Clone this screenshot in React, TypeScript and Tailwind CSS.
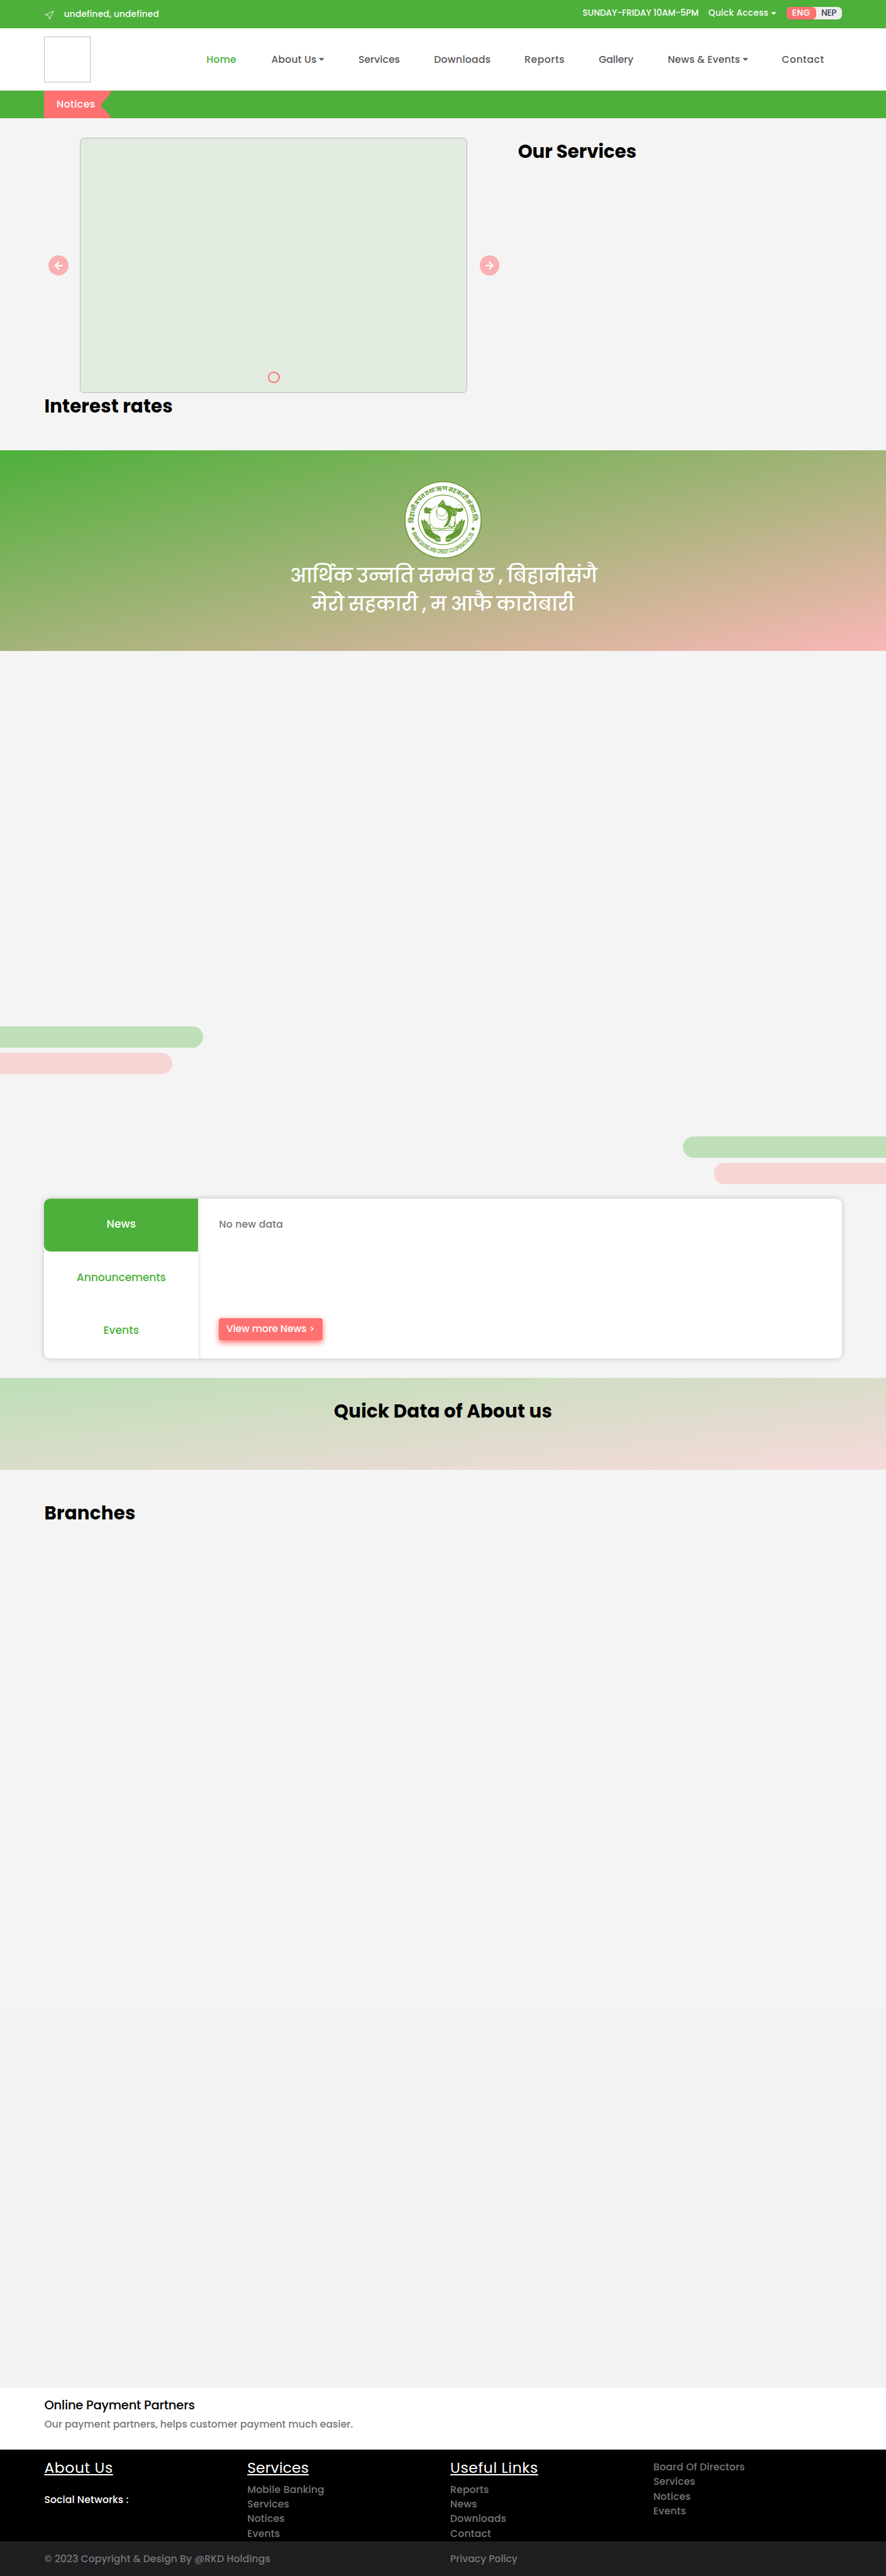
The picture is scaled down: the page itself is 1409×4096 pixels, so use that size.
import type { ReactNode } from "react";
import { ArrowLeft, ArrowRight, Navigation } from "lucide-react";

function Caret() {
  return (
    <svg width="9" height="5" viewBox="0 0 9 5" fill="currentColor">
      <path d="M0 0.300H9L4.500 4.800Z" />
    </svg>
  );
}

function TopBar() {
  return (
    <div className="flex h-[46px] justify-between bg-[#4db03a] px-[72px] text-[14px] font-medium text-white">
      <div className="flex items-center pt-[2px]">
        <Navigation className="mt-[1px]" size={17} strokeWidth={1.3} />
        <span className="ml-[15px] tracking-[0.21px]">undefined, undefined</span>
      </div>
      <div className="flex h-[43px] items-center">
        <span className="tracking-[-0.06px]">SUNDAY-FRIDAY 10AM-5PM</span>
        <span className="ml-[16px] flex items-center gap-[4px]">
          <span className="tracking-[0.34px]">Quick Access</span>
          <Caret />
        </span>
        <div className="ml-[16px] flex h-[21px] w-[90px] items-center rounded-[7px] bg-[#eeeeee] shadow-[0_1px_1px_rgba(0,0,0,0.15)]">
          <span className="flex h-full w-[48px] items-center justify-center rounded-[7px] bg-[#ff7070] font-semibold tracking-[0.4px] text-[#f3f3f3]">
            ENG
          </span>
          <span className="flex-1 text-center tracking-[-0.3px] text-[#2f3e52]">NEP</span>
        </div>
      </div>
    </div>
  );
}

function NavItem({ className, caret, children }: { className: string; caret?: boolean; children: ReactNode }) {
  return (
    <a className={`flex items-center gap-[4px] whitespace-nowrap ${className}`}>
      {children}
      {caret && <Caret />}
    </a>
  );
}

function Header() {
  return (
    <header className="flex h-[101px] items-center bg-white pl-[72px] text-[16px] font-medium text-[#585858]">
      <div className="h-[75px] w-[75px] border border-[#c0c0c0]" />
      <nav className="ml-[188.6px] flex">
        <NavItem className="w-[105.4px] tracking-[0.2px] text-[#4db03a]">Home</NavItem>
        <NavItem className="w-[141.6px] tracking-[0.18px]" caret>About Us</NavItem>
        <NavItem className="w-[123px] tracking-[0.06px]">Services</NavItem>
        <NavItem className="w-[147px] tracking-[0.28px]">Downloads</NavItem>
        <NavItem className="w-[120.9px] tracking-[0.56px]">Reports</NavItem>
        <NavItem className="w-[112.1px] tracking-[-0.11px]">Gallery</NavItem>
        <NavItem className="w-[185.4px] tracking-[0.13px]" caret>News &amp; Events</NavItem>
        <NavItem className="w-[75px] tracking-[0.52px]">Contact</NavItem>
      </nav>
    </header>
  );
}

function NoticeBar() {
  return (
    <div className="h-[45px] bg-[#4db03a] pl-[72px]">
      <div className="relative flex h-full w-[109px] items-center pl-[20px] text-[16px] font-medium text-white">
        <svg className="absolute inset-0" width="109" height="45" viewBox="0 0 109 45" fill="#ff7070">
          <path d="M3 0H105Q110 0 108 4.500L94 21.500Q92 24 94 27L107 40.500Q109 45 105 45H3Q0 45 0 42V3Q0 0 3 0Z" />
        </svg>
        <span className="relative tracking-[0.43px]">Notices</span>
      </div>
    </div>
  );
}

function Hero() {
  return (
    <section className="h-[540px] pt-[32px]">
      <div className="flex pl-[79px]">
        <div className="flex items-center">
          <button className="flex h-[33px] w-[32px] items-center justify-center rounded-full bg-[#fab0b0] text-white">
            <ArrowLeft size={19} strokeWidth={3} />
          </button>
          <div className="ml-[19px] flex h-[415px] w-[630px] items-end justify-center rounded-[7px] border border-[#b4c0ae] bg-[#e1ebdf] pb-[15px]">
            <span className="h-[19px] w-[19px] rounded-full border-[2.1px] border-[#ff7070]" />
          </div>
          <button className="ml-[20px] flex h-[33px] w-[32px] items-center justify-center rounded-full bg-[#fab0b0] text-white">
            <ArrowRight size={19} strokeWidth={3} />
          </button>
        </div>
        <h2 className="mt-[1px] ml-[30px] text-[30px] leading-[42px] font-bold tracking-[-0.1px] text-black">Our Services</h2>
      </div>
      <h2 className="pl-[72px] text-[30px] leading-[43px] font-bold tracking-[0.14px] text-black">Interest rates</h2>
    </section>
  );
}

function Hand() {
  return (
    <>
      <path
        fill="#659b33"
        d="M133 227q4-5 8 2l4 9q-2-18 4-16q5 2 8 18q0-13 5-9l6 22q1-13 6-7q3 18 9 29q7 13 21 20q22 8 24 18v18h-24v-2q-2-7-20-15q-29-13-36-36q-12-30-15-51z"
      />
      <path fill="none" stroke="#fff" strokeWidth="1.500" d="M145 240l9 29M157 242l9 30M168 253l7 19M202 316h28M202 322h28" />
    </>
  );
}

function Emblem() {
  return (
    <svg className="overflow-visible" width="126" height="126" viewBox="51 36 378 378">
      <defs>
        <path id="ring-top" d="M116.200 296.500A143 143 0 1 1 363.800 296.500" />
        <path id="ring-bottom" d="M86.500 288A167 167 0 0 0 393.500 288" />
      </defs>
      <circle cx="240" cy="225" r="186" fill="#fff" stroke="#659b33" strokeWidth="5" />
      <circle cx="240" cy="225" r="121" fill="none" stroke="#659b33" strokeWidth="3.500" />
      <text fill="#659b33" fontSize="28" fontWeight="700" wordSpacing="-3" fontFamily="Poppins, 'Noto Sans', sans-serif">
        <textPath href="#ring-top" startOffset="50%" textAnchor="middle">बिहानी बचत तथा ऋण सहकारी संस्था लि.</textPath>
      </text>
      <text fill="#659b33" fontSize="31" fontWeight="700" fontFamily="'Liberation Sans', sans-serif">
        <textPath href="#ring-bottom" startOffset="2" textLength="385" lengthAdjust="spacingAndGlyphs">
          BIHANI SAVING AND CREDIT CO-OPERATIVE LTD.
        </textPath>
      </text>
      <circle cx="94" cy="269" r="7.500" fill="#659b33" />
      <circle cx="386" cy="269" r="7.500" fill="#659b33" />
      <Hand />
      <g transform="translate(480 0) scale(-1 1)">
        <Hand />
      </g>
      <g fill="none" stroke="#659b33" strokeWidth="2.500">
        <circle cx="233" cy="183" r="24" />
        <path d="M207 176q-5 46 30 50q24 2 28-22M177 190q-10 36 4 58q16 24 52 24q36-2 44-30M182 182q8-16 26-24" />
        <path d="M176 274q6-10 20-8l94 1q12 0 12 8q-8 4-14 0q-10 6-20 0q-12 6-22 0q-12 6-22 0q-12 6-22 0q-10 6-26-1zM180 246q-8 12 2 24M298 206q6 20-4 38q10 12 4 30" />
        <path d="M222 160l18-34l14 30M228 158l12-24l8 20" />
        <circle cx="320" cy="164" r="12" strokeDasharray="4 3" />
        <circle cx="286" cy="190" r="12" />
        <path d="M268 252q6 12 20 8q14-10 10-28" strokeWidth="5" />
      </g>
      <path fill="#659b33" d="M214 154l24-26l16 26q24 0 34 12q24 0 22 6q20-8 30-2q-2 16-22 16q-8 2-14-4q6 14-2 22q-10 8-20 0q-6 30-16 44q-12 16-24 10q18-18 22-40q4-26-12-42q-16-14-38-16z" />
      <path fill="#659b33" d="M147 172l10-10l12 6l20 2l-14 14l8 6l-10 4l-24-2z" />
      <path fill="none" stroke="#fff" strokeWidth="2" d="M226 152l12-10l10 10M274 176q12 4 14 24M290 172q12 6 8 24" />
    </svg>
  );
}

function Slogan() {
  return (
    <section className="flex h-[326px] flex-col items-center bg-[linear-gradient(to_bottom_right,#4db03a,#fab7b7)] pt-[50px] text-[32px] leading-[46px] font-medium text-white">
      <Emblem />
      <p className="mt-[5px] pl-[2px] [word-spacing:-1.2px]">आर्थिक उन्नति सम्भव छ , बिहानीसंगै</p>
      <p className="[word-spacing:-1.5px]">मेरो सहकारी , म आफै कारोबारी</p>
    </section>
  );
}

function Stripes() {
  return (
    <section className="flex h-[890px] flex-col pt-[610px]">
      <div className="flex flex-col gap-[8px]">
        <div className="h-[35px] w-[330px] rounded-r-full bg-[#bfdfb9]" />
        <div className="h-[35px] w-[280px] rounded-r-full bg-[#f6d6d5]" />
      </div>
      <div className="mt-[101px] flex flex-col items-end gap-[8px]">
        <div className="h-[35px] w-[330px] rounded-l-full bg-[#bfdfb9]" />
        <div className="h-[35px] w-[280px] rounded-l-full bg-[#f6d6d5]" />
      </div>
    </section>
  );
}

function NewsPanel() {
  return (
    <section className="mx-[72px] flex h-[260px] rounded-[10px] bg-white font-medium shadow-[0_0_10px_rgba(0,0,0,0.2)]">
      <div className="flex w-[250px] flex-col text-[17.600px] text-[#4db03a]">
        <div className="flex flex-1 items-center justify-center rounded-l-[10px] bg-[#4db03a] pb-[1px] text-white">News</div>
        <div className="flex flex-1 items-center justify-center pb-[1px] tracking-[-0.16px]">Announcements</div>
        <div className="flex flex-1 items-center justify-center pb-[2px]">Events</div>
      </div>
      <div className="w-[4px] bg-[#f3f3f3]" />
      <div className="flex flex-1 flex-col items-start justify-between pt-[30px] pb-[30px] pl-[30px]">
        <p className="text-[16px] leading-[24px] tracking-[0.2px] text-[#777777]">No new data</p>
        <button className="flex h-[35px] w-[168px] items-center rounded-[4px] bg-[#ff7070] pb-[2px] pl-[12px] text-[16px] tracking-[-0.17px] whitespace-nowrap text-white shadow-[0_4px_10px_rgba(255,80,80,0.8)]">
          View more News
          <svg className="ml-[6px]" width="7" height="8" viewBox="0 0 7 8" fill="none" stroke="currentColor" strokeWidth="1.700">
            <path d="M1.500 1L5 4L1.500 7" />
          </svg>
        </button>
      </div>
    </section>
  );
}

function FooterTitle({ className, children }: { className: string; children: ReactNode }) {
  return (
    <h3 className={`text-[24px] leading-[36px] font-normal text-white underline decoration-[2.1px] underline-offset-2 ${className}`}>
      {children}
    </h3>
  );
}

function FooterLinks({ links }: { links: string[] }) {
  return (
    <ul>
      {links.map((link) => (
        <li key={link} className="h-[24px] tracking-[0.15px] text-[#777777]">
          {link}
        </li>
      ))}
    </ul>
  );
}

function Footer() {
  return (
    <footer className="text-[16px] leading-[24px] font-medium">
      <div className="h-[101px] bg-white pt-[14px] pl-[72px]">
        <h4 className="text-[20px] leading-[30px] tracking-[-0.22px] text-black">Online Payment Partners</h4>
        <p className="mt-[3.400px] tracking-[0.04px] text-[#777777]">Our payment partners, helps customer payment much easier.</p>
      </div>
      <div className="flex h-[149px] bg-black pt-[11.300px] pl-[72px]">
        <div className="w-[330px]">
          <FooterTitle className="tracking-[0.6px]">About Us</FooterTitle>
          <p className="mt-[21.400px] tracking-[0.1px] text-white">Social Networks :</p>
        </div>
        <div className="w-[330px]">
          <FooterTitle className="mb-[5px] tracking-[0.1px]">Services</FooterTitle>
          <FooterLinks links={["Mobile Banking", "Services", "Notices", "Events"]} />
        </div>
        <div className="w-[330px]">
          <FooterTitle className="mb-[5px] tracking-[0.6px]">Useful Links</FooterTitle>
          <FooterLinks links={["Reports", "News", "Downloads", "Contact"]} />
        </div>
        <div className="pt-[4.500px]">
          <FooterLinks links={["Board Of Directors", "Services", "Notices", "Events"]} />
        </div>
      </div>
      <div className="flex h-[56px] items-center bg-[#1e1f21] pl-[72px] text-[#777777]">
        <p className="w-[660px] tracking-[0.05px]">© 2023 Copyright &amp; Design By @RKD Holdings</p>
        <p className="tracking-[-0.06px]">Privacy Policy</p>
      </div>
    </footer>
  );
}

export default function App() {
  return (
    <div className="h-[4187px] overflow-hidden bg-[#f4f4f4] font-[Poppins,Inter,sans-serif] [zoom:0.97827]">
      <TopBar />
      <Header />
      <NoticeBar />
      <Hero />
      <Slogan />
      <Stripes />
      <NewsPanel />
      <section className="mt-[32px] h-[149.300px] bg-[linear-gradient(to_bottom_right,#bddfb7,#f6dadb)] pt-[32px]">
        <h2 className="text-center text-[30px] leading-[42px] font-bold tracking-[0.21px] text-black">Quick Data of About us</h2>
      </section>
      <section className="h-[873.700px] pt-[48.500px] pl-[72px]">
        <h2 className="text-[30px] leading-[42px] font-bold tracking-[0.2px] text-black">Branches</h2>
      </section>
      <section className="h-[618px] bg-[#f2f2f2]" />
      <Footer />
    </div>
  );
}
